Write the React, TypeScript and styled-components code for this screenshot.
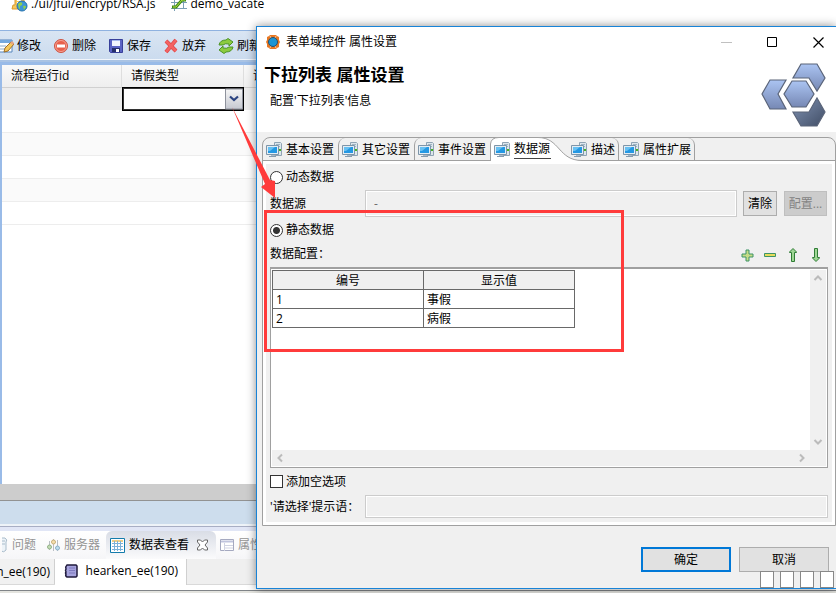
import React from "react";
import styled, { createGlobalStyle } from "styled-components";

const GlobalStyle = createGlobalStyle`
  * { box-sizing: border-box; }
  body {
    margin: 0;
    background: #fff;
    color: #000;
    font: 12px/16px "Open Sans", "Noto Sans CJK SC", sans-serif;
    overflow: hidden;
  }
  button, input, select { font: inherit; color: inherit; border-radius: 0; margin: 0; padding: 0; }
  svg { display: block; flex: none; }
`;

/* ---------- workbench behind the dialog ---------- */

const Screen = styled.div`
  position: relative;
  min-height: 100vh;
  display: flex;
  flex-direction: column;
  overflow: hidden;
  white-space: nowrap;
`;

const FileTabs = styled.nav`
  height: 30px;
  display: flex;
  align-items: flex-start;
  gap: 16px;
  padding-left: 11px;
`;

const FileTab = styled.button`
  display: flex;
  align-items: center;
  gap: 3px;
  height: 16px;
  margin-top: -4px;
  border: 0;
  background: none;
`;

const Toolbar = styled.div`
  height: 32px;
  display: flex;
  align-items: center;
  gap: 12px;
  border-top: 1px solid #8fb2e0;
  border-bottom: 2px solid #a9c3e4;
  padding-top: 1px;
  background: linear-gradient(#d9e5f3, #cbdbee);
  box-shadow: inset 0 -1px 0 #f0f5fb;
`;

const ToolButton = styled.button`
  display: flex;
  align-items: center;
  gap: 3px;
  border: 0;
  background: none;
`;

const GridArea = styled.section`
  flex: 1;
  border-top: 3px solid #99bbe8;
  border-left: 2px solid #99bbe8;
  background: #fff;
`;

const DataGrid = styled.table`
  width: 100%;
  table-layout: fixed;
  border-collapse: separate;
  border-spacing: 0;
  th {
    height: 23px;
    padding: 0 0 0 9px;
    text-align: left;
    font-weight: normal;
    background: linear-gradient(#f9f9f9, #eeeeee);
    border-right: 1px solid #dedede;
    border-bottom: 1px solid #d0d0d0;
  }
`;

const GridRow = styled.tr<{ $tone: string }>`
  height: 23px;
  background: ${(p) => p.$tone};
  td { padding: 0; border-bottom: 1px solid #ededed; }
  &:first-child { height: 22px; }
`;

const ComboFrame = styled.div`
  position: relative;
  height: 24px;
  margin: -1px 0 -2px;
  border: 1px solid #000;
  background: #fff;
  svg { position: absolute; right: 0; top: 0; pointer-events: none; }
`;

const Combo = styled.select`
  appearance: none;
  display: block;
  width: 100%;
  height: 22px;
  border: 1px solid #333;
  background: #fff;
`;

const GrayBand = styled.div`
  height: 16px;
  background: #cdcdcd;
`;

const BlueBand = styled.div`
  height: 24px;
  border-top: 1px solid #929292;
  background: #cddded;
`;

const ViewTabs = styled.nav`
  height: 35px;
  display: flex;
  align-items: flex-end;
  border-top: 2px solid #eef3f8;
  background: linear-gradient(#a8aec4 1px, #e1e6f6 1px 5px, #ffffff 5px, #f6f6f8);
`;

const ViewTab = styled.button<{ $on?: boolean; $width: number }>`
  width: ${(p) => p.$width}px;
  height: 28px;
  display: flex;
  align-items: center;
  gap: 4px;
  border: 0;
  padding: 0 0 0 4px;
  color: ${(p) => (p.$on ? "#000" : "#949494")};
  border-radius: 6px 6px 0 0;
  background: ${(p) => (p.$on ? "linear-gradient(#d9dde6, #fbfbfc)" : "none")};
  &:first-child { padding-left: 2px; }
`;

const SubTabs = styled.nav`
  height: 26px;
  display: flex;
  border-bottom: 1px solid #d9d9d9;
  background: #efefef;
`;

const SubTab = styled.button<{ $on?: boolean; $width: number }>`
  width: ${(p) => p.$width}px;
  height: ${(p) => (p.$on ? 26 : 25)}px;
  display: flex;
  align-items: center;
  justify-content: flex-end;
  gap: 8px;
  border: 0;
  border-right: 1px solid #d0d0d0;
  padding: 0 ${(p) => (p.$on ? 8 : 4)}px ${(p) => (p.$on ? 3 : 0)}px 0;
  background: ${(p) => (p.$on ? "#fff" : "#f1f1f1")};
`;

const StatusLine = styled.footer`
  height: 8px;
  border-top: 5px solid #fff;
  background: linear-gradient(#808488 1px, #e4e4df 1px);
`;

/* ---------- dialog ---------- */

const Dialog = styled.section`
  position: absolute;
  left: 256px;
  top: 26px;
  right: 0;
  bottom: 4px;
  display: flex;
  flex-direction: column;
  border: 1px solid #1883d7;
  border-right: 0;
  background: #f0f0f0;
  box-shadow: 0 0 9px rgba(0, 0, 0, 0.45);
`;

const DialogHead = styled.header`
  height: 105px;
  background: #fff;
`;

const TitleBar = styled.div`
  height: 30px;
  display: flex;
  align-items: center;
  gap: 5px;
  padding-left: 8px;
`;

const WindowButtons = styled.div`
  margin-left: auto;
  display: flex;
  gap: 10px;
`;

const WindowButton = styled.button`
  width: 36px;
  height: 28px;
  display: grid;
  place-items: center;
  border: 0;
  background: none;
`;

const Banner = styled.div`
  display: flex;
  justify-content: space-between;
  padding: 5px 9px 0 7px;
`;

const DialogTitle = styled.h1`
  margin: 0 0 4px;
  padding-top: 2px;
  font-size: 17px;
  line-height: 22px;
  font-weight: bold;
`;

const Subtitle = styled.p`
  margin: 0;
  padding: 3px 0 0 6px;
`;

const Folder = styled.div`
  flex: 1;
  display: flex;
  flex-direction: column;
  margin: 5px 0 0 5px;
  border: 1px solid #a0a0a0;
  border-radius: 8px 8px 0 0;
`;

const TabStrip = styled.div`
  height: 23px;
  display: flex;
  border-bottom: 1px solid #a0a0a0;
`;

const Tab = styled.button<{ $edge?: "left" | "right" }>`
  position: relative;
  height: 22px;
  display: flex;
  align-items: center;
  gap: 4px;
  border: 0 solid #a0a0a0;
  border-left-width: ${(p) => (p.$edge === "left" ? 1 : 0)}px;
  border-right-width: ${(p) => (p.$edge === "right" ? 1 : 0)}px;
  border-radius: ${(p) => (p.$edge === "left" ? "7px 0 0 0" : "0 7px 0 0")};
  padding: 1px 4px 0 3px;
  background: none;
`;

const RightTab = styled(Tab)`
  padding: 1px 3px 0 4px;
`;

const ActiveTab = styled(Tab)`
  padding: 1px 16px 0 4px;
  > svg, > span { position: relative; }
  > span { border-bottom: 1px solid #444; height: 19px; padding: 1px 1px 0 0; }
`;

const TabShape = styled.div`
  position: absolute;
  left: 0;
  top: -1px;
`;

const Panel = styled.div`
  flex: 1;
  display: flex;
  flex-direction: column;
  gap: 3px;
  border: 3px solid #fff;
  padding: 3px 4px 4px;
`;

const Row = styled.div<{ $h: number }>`
  height: ${(p) => p.$h}px;
  display: flex;
  align-items: center;
`;

const ToggleLabel = styled.label`
  display: flex;
  align-items: center;
  gap: 3px;
`;

const Radio = styled.input`
  appearance: none;
  width: 13px;
  height: 13px;
  border: 1px solid #333;
  border-radius: 50%;
  background: #fff;
  &:checked { background: radial-gradient(circle, #333 3px, #fff 4px); }
`;

const CheckBox = styled.input`
  appearance: none;
  width: 13px;
  height: 13px;
  border: 1px solid #333;
  background: #fff;
`;

const FieldLabel = styled.label`
  width: 95px;
`;

const TextBox = styled.input`
  flex: 1;
  min-width: 0;
  height: 100%;
  border: 1px solid #ccc;
  padding: 0 8px;
  background: #f0f0f0;
  color: #6d6d6d;
  box-shadow: inset 0 0 0 1px #fff;
`;

const SmallButton = styled.button`
  height: 25px;
  width: 34px;
  margin-left: 6px;
  border: 1px solid #adadad;
  background: #e1e1e1;
  &:disabled { width: 43px; margin: 0 1px 0 7px; background: #ccc; border-color: #bfbfbf; color: #838383; }
`;

const Tools = styled.div`
  margin-left: auto;
  padding: 2px 4px 0 0;
  display: flex;
  gap: 7px;
`;

const IconButton = styled.button`
  width: 16px;
  height: 16px;
  border: 0;
  background: none;
`;

const ListFrame = styled.div`
  flex: 1;
  display: grid;
  grid-template: 1fr 16px / 1fr 16px;
  border: 1px solid #a0a0a0;
  border-top-width: 2px;
  background: #fff;
  padding: 1px;
`;

const ListBody = styled.div`
  min-width: 0;
`;

const ValueTable = styled.table`
  width: 303px;
  table-layout: fixed;
  border-collapse: collapse;
  border: 1px solid #696969;
  th, td {
    height: 19px;
    padding: 1px 3px 0;
    border: 1px solid #696969;
    line-height: 16px;
  }
  th { background: #f0f0f0; font-weight: normal; }
`;

const ScrollBar = styled.div<{ $vertical?: boolean }>`
  display: flex;
  flex-direction: ${(p) => (p.$vertical ? "column" : "row")};
  justify-content: space-between;
  background: #f0f0f0;
`;

const Corner = styled.div`
  background: #f0f0f0;
`;

const Actions = styled.footer`
  height: 62px;
  display: flex;
  justify-content: flex-end;
  gap: 8px;
  padding: 21px 7px 0 0;
`;

const ActionButton = styled.button<{ $primary?: boolean }>`
  width: 90px;
  height: 25px;
  border: ${(p) => (p.$primary ? "2px solid #0078d7" : "1px solid #adadad")};
  background: #e1e1e1;
`;

const Squares = styled.div`
  position: absolute;
  right: 2px;
  bottom: 0;
  display: flex;
  gap: 6px;
`;

const Square = styled.i`
  width: 14px;
  height: 17px;
  border: 1px solid #888;
  background: #fff;
`;

const Markup = styled.svg`
  position: absolute;
  left: 0;
  top: 0;
  pointer-events: none;
`;

/* ---------- icons ---------- */

const ScriptIcon = () => (
  <svg width="17" height="16" viewBox="0 0 17 16">
    <path d="M4 1h9v12H1l1-4h2z" fill="#f8c85a" stroke="#d89830" />
    <path d="M6 4h4M6 7h3" stroke="#fff" strokeWidth="2" />
    <circle cx="11" cy="10" r="5" fill="#3d96d6" stroke="#2270ad" />
    <path d="M7 8q3-3 4-1t-2 3q0 4-1 3zM12 10q3-1 3 1l-2 3z" fill="#8ed04c" />
  </svg>
);
const FlowIcon = () => (
  <svg width="16" height="16" viewBox="0 0 16 16" fill="none">
    <path d="M0 6.5h16M0 12.5h16M3.500 3v12M12.500 1v12" stroke="#7b9fb5" />
    <path d="M1 11h4l6-7h4" stroke="#3c8a18" strokeWidth="3" />
    <path d="M2 11h3l6-7h3" stroke="#b6dd42" />
  </svg>
);
const EditIcon = () => (
  <svg width="14" height="16" viewBox="2 0 14 16">
    <path d="M0 2h14v12H0z" fill="#fff" stroke="#5485bd" />
    <path d="M0 2h14v3H0z" fill="#74a8df" />
    <path d="M2 8h6M2 11h5" stroke="#8baacb" />
    <path d="m6 14 1-4 6-6 3 2-6 7z" fill="#f7c95c" stroke="#9c6d29" />
    <path d="m12 5 2-2 2 2-1 2z" fill="#e7a482" />
  </svg>
);
const DeleteIcon = () => (
  <svg width="16" height="16" viewBox="0 0 16 16">
    <circle cx="8" cy="8" r="6.5" fill="#e8604c" stroke="#cc5544" />
    <circle cx="8" cy="8" r="5.5" fill="none" stroke="#f5a193" />
    <path d="M4 6.5h8v3H4z" fill="#fff" />
  </svg>
);
const SaveIcon = () => (
  <svg width="16" height="16" viewBox="0 0 16 16">
    <path d="M1.500 1.500h13v13h-12l-1-1z" fill="#5a63c4" stroke="#38409a" />
    <path d="M4 2h8v6H4z" fill="#f1f5fe" />
    <path d="M4 2h8v1H4z" fill="#a6b9ec" />
    <path d="M4 10h8v4H4z" fill="#26306c" />
    <path d="M8 11h3v3H8z" fill="#fff" />
  </svg>
);
const DiscardIcon = () => (
  <svg width="16" height="16" viewBox="0 0 16 16">
    <path d="m3 3 10 10M13 2 3 14" stroke="#dc4a4a" strokeWidth="4" />
    <path d="m3 3 10 10M13 2 3 14" stroke="#f46262" strokeWidth="2.5" />
  </svg>
);
const RefreshIcon = () => (
  <svg width="16" height="16" viewBox="0 0 16 16" fill="#8ccb3f" stroke="#4c9326" strokeLinejoin="round">
    <path d="M1 7q1-5 7-5l2-1.500L15 4l-4 4V6Q7 5 5 7z" />
    <path d="M15 9q-1 5-7 5l-2 1.500L1 12l4-4v2q4 1 6-1z" />
  </svg>
);
const ProblemsIcon = () => (
  <svg width="6" height="16" viewBox="10 0 6 16" fill="none" stroke="#a9bccb">
    <path d="M6 1h7q3 2 1 4v8q-2 3-5 1H6" fill="#edf3f8" />
    <path d="M10 4h3M10 7h3" />
  </svg>
);
const ServersIcon = () => (
  <svg width="13" height="16" viewBox="0 0 13 16">
    <path d="M2.500 4v9M6.500 2v12M10.500 3v11" stroke="#b9bec3" />
    <circle cx="2.500" cy="10" r="2" fill="#c4ddb5" stroke="#92b187" />
    <circle cx="6.500" cy="5" r="2" fill="#f5dfae" stroke="#c9b078" />
    <circle cx="10.500" cy="11" r="2" fill="#bcdef0" stroke="#8ab0c8" />
  </svg>
);
const GridIcon = () => (
  <svg width="15" height="15" viewBox="0 0 15 15">
    <path d="M.5.5h14v14H.5z" fill="#fff" stroke="#147cac" />
    <path d="M2 2h11v2H2z" fill="#edce86" />
    <path d="M2 5.500h11M2 8.500h11M2 11.500h11M4.500 3v10M7.500 3v10M10.500 3v10" stroke="#7db2d8" />
  </svg>
);
const CloseViewIcon = () => (
  <svg width="18" height="12" viewBox="-4 0 18 12" fill="#fff" stroke="#666">
    <path d="M.5 1h3l2 2 2-2h3v2L8 6l2.500 3v2h-3l-2-2-2 2h-3V9L3 6 .5 3z" />
  </svg>
);
const PropsIcon = () => (
  <svg width="14" height="14" viewBox="0 0 14 14" fill="#fff" stroke="#a5a9c0">
    <path d="M.5 1.500h13v11H.5z" />
    <path d="M1 3.500h12" stroke="#c0c4dd" strokeWidth="2" />
    <path d="M4.500 5v8M5 7.500h8M5 10h8" stroke="#d0d3e2" />
  </svg>
);
const DatabaseIcon = () => (
  <svg width="14" height="14" viewBox="0 0 14 14">
    <path d="M3 1h9l1 1v10l-1 1H3q-2-1-1-3-1-1 0-2-1-2 0-3-1-2 1-4z" fill="#a6a3dd" stroke="#201b3d" strokeWidth="1.500" />
    <path d="M5 4h6M5 6.500h6M5 9h6" stroke="#7d79bd" />
  </svg>
);
const AppIcon = () => (
  <svg width="16" height="16" viewBox="0 0 16 16">
    <path d="M5 1h6l1 1 2 1v3l1 2-1 2v3l-2 1-1 1H5l-1-1-2-1v-3L1 8l1-2V3l2-1z" fill="#e87722" />
    <path d="m5 2 6 12M11 2 5 14" stroke="#f6c89d" />
    <circle cx="8" cy="8" r="4.500" fill="#1b95d5" stroke="#25506e" />
  </svg>
);
const ServerPcIcon = () => (
  <svg width="16" height="16" viewBox="0 0 16 16">
    <path d="M8.500.5h6l1 1v12h-7z" fill="#dde6ec" stroke="#8fa3b3" />
    <path d="M10 2.500h4M10 4.500h4" stroke="#9fb4c2" />
    <path d="M13 7h2v2h-2z" fill="#44b521" />
    <path d="M.5 3.500h12v9H.5z" fill="#e3edf4" stroke="#7d95a9" />
    <path d="M2 5h9v6H2z" fill="#2498e3" />
    <path d="M2 5h7l-5 4H2z" fill="#67c0f2" />
    <path d="M3 14.500h7" stroke="#879cae" />
    <path d="M5 13h3v1H5z" fill="#a9bac7" />
  </svg>
);
const BannerLogo = () => (
  <svg width="66" height="66" viewBox="0 0 66 66" stroke="#5a6479" strokeWidth="1.200">
    <defs>
      <linearGradient id="light" x2="0" y2="1">
        <stop stopColor="#abc4f2" />
        <stop offset="1" stopColor="#7688b4" />
      </linearGradient>
      <linearGradient id="dark" x2="1" y2="1">
        <stop stopColor="#8193b3" />
        <stop offset="1" stopColor="#414e66" />
      </linearGradient>
    </defs>
    <path d="M40 2h16l8 14-8 13-8-13H32z" fill="url(#light)" />
    <path d="M9 18h16l-8 14 8 15H9L1 32z" fill="url(#light)" />
    <path d="M31 19h14l8 13-8 13H31l-8-13z" fill="url(#light)" />
    <path d="m56 36 8 14-8 14H40l-8-14h16z" fill="url(#dark)" />
  </svg>
);
const Chevron = ({ turn }: { turn: number }) => (
  <svg width="16" height="16" viewBox="0 0 16 16" fill="none">
    <path d="m4.500 10 3.500-3.500L11.500 10" stroke="#bbb" strokeWidth="2" transform={`rotate(${turn} 8 8)`} />
  </svg>
);
const PlusIcon = () => (
  <svg width="16" height="16" viewBox="0 0 16 16">
    <path d="M7 3h3v4h4v3h-4v4H7v-4H3V7h4z" fill="#c6dc86" stroke="#3d9467" />
  </svg>
);
const MinusIcon = () => (
  <svg width="16" height="16" viewBox="0 0 16 16">
    <path d="M2.500 6.500h11v3h-11z" fill="#e6dc5c" stroke="#3d9467" />
  </svg>
);
const ArrowIcon = ({ down }: { down?: boolean }) => (
  <svg width="16" height="16" viewBox="0 0 16 16">
    <path d="M8 1.500 11.500 5v.5h-2v9h-3v-9h-2V5z" fill="#9ed694" stroke="#2f7d35" transform={down ? "rotate(180 8 8)" : undefined} />
  </svg>
);

const tools = [
  { label: "修改", Icon: EditIcon },
  { label: "删除", Icon: DeleteIcon },
  { label: "保存", Icon: SaveIcon },
  { label: "放弃", Icon: DiscardIcon },
  { label: "刷新", Icon: RefreshIcon },
];
const values = [
  ["1", "事假"],
  ["2", "病假"],
];

function Workbench() {
  return (
    <>
      <FileTabs>
        <FileTab><ScriptIcon />./ui/jfui/encrypt/RSA.js</FileTab>
        <FileTab><FlowIcon />demo_vacate</FileTab>
      </FileTabs>
      <Toolbar>
        {tools.map(({ label, Icon }) => (
          <ToolButton key={label}><Icon />{label}</ToolButton>
        ))}
      </Toolbar>
      <GridArea>
        <DataGrid>
          <colgroup>
            <col width="120" />
            <col width="122" />
            <col />
          </colgroup>
          <thead>
            <tr><th>流程运行id</th><th>请假类型</th><th>请假</th></tr>
          </thead>
          <tbody>
            <GridRow $tone="#ededed">
              <td />
              <td>
                <ComboFrame>
                  <Combo aria-label="请假类型" />
                  <svg width="18" height="22" viewBox="0 0 18 22">
                    <defs>
                      <linearGradient id="drop" x2="0" y2="1">
                        <stop stopColor="#f6f6f6" />
                        <stop offset="1" stopColor="#c6c9d1" />
                      </linearGradient>
                    </defs>
                    <path d="M.5 1v20h17V1z" fill="url(#drop)" stroke="#8e929c" />
                    <path d="m5 8.500 4 3.500 4-3.500" fill="none" stroke="#2c4480" strokeWidth="2.200" />
                  </svg>
                </ComboFrame>
              </td>
              <td />
            </GridRow>
            {["#fff", "#fafafa", "#fff", "#fafafa", "#fff"].map((tone, i) => (
              <GridRow key={i} $tone={tone}><td /><td /><td /></GridRow>
            ))}
          </tbody>
        </DataGrid>
      </GridArea>
      <GrayBand />
      <BlueBand />
      <ViewTabs>
        <ViewTab $width={43}><ProblemsIcon />问题</ViewTab>
        <ViewTab $width={63}><ServersIcon />服务器</ViewTab>
        <ViewTab $width={110} $on><GridIcon />数据表查看<CloseViewIcon /></ViewTab>
        <ViewTab $width={60}><PropsIcon />属性</ViewTab>
      </ViewTabs>
      <SubTabs>
        <SubTab $width={55}>hearken_ee(190)</SubTab>
        <SubTab $width={132} $on><DatabaseIcon />hearken_ee(190)</SubTab>
      </SubTabs>
      <StatusLine />
    </>
  );
}

function PropertyDialog() {
  return (
    <Dialog role="dialog" aria-labelledby="dialog-title">
      <DialogHead>
        <TitleBar>
          <AppIcon />
          表单域控件 属性设置
          <WindowButtons>
            <WindowButton aria-label="最小化" disabled>
              <svg width="11" height="11"><path d="M0 5.500h11" stroke="#c0c0c0" /></svg>
            </WindowButton>
            <WindowButton aria-label="最大化">
              <svg width="11" height="11"><path d="M.5.5h9v9h-9z" fill="none" stroke="#000" /></svg>
            </WindowButton>
            <WindowButton aria-label="关闭">
              <svg width="11" height="11"><path d="m.5.5 10 10m0-10-10 10" stroke="#000" strokeWidth="1.200" /></svg>
            </WindowButton>
          </WindowButtons>
        </TitleBar>
        <Banner>
          <div>
            <DialogTitle id="dialog-title">下拉列表 属性设置</DialogTitle>
            <Subtitle>配置'下拉列表'信息</Subtitle>
          </div>
          <BannerLogo />
        </Banner>
      </DialogHead>
      <Folder>
        <TabStrip role="tablist">
          <Tab role="tab"><ServerPcIcon />基本设置</Tab>
          <Tab role="tab" $edge="left"><ServerPcIcon />其它设置</Tab>
          <Tab role="tab" $edge="left"><ServerPcIcon />事件设置</Tab>
          <ActiveTab role="tab" aria-selected="true">
            <TabShape>
              <svg width="96" height="25" viewBox="0 0 96 25">
                <path d="M.5 25V7Q1 .5 9 .5h39c22 0 20 23 44 23V25z" fill="#fff" />
                <path d="M.5 24V7Q1 .5 9 .5h39c22 0 20 23 44 23" fill="none" stroke="#a0a0a0" />
              </svg>
            </TabShape>
            <ServerPcIcon />
            <span>数据源</span>
          </ActiveTab>
          <RightTab role="tab" $edge="right"><ServerPcIcon />描述</RightTab>
          <RightTab role="tab" $edge="right"><ServerPcIcon />属性扩展</RightTab>
        </TabStrip>
        <Panel role="tabpanel">
          <Row $h={20}>
            <ToggleLabel><Radio type="radio" name="mode" />动态数据</ToggleLabel>
          </Row>
          <Row $h={27}>
            <FieldLabel htmlFor="source">数据源</FieldLabel>
            <TextBox id="source" defaultValue="-" disabled />
            <SmallButton>清除</SmallButton>
            <SmallButton disabled>配置...</SmallButton>
          </Row>
          <Row $h={20}>
            <ToggleLabel><Radio type="radio" name="mode" defaultChecked />静态数据</ToggleLabel>
          </Row>
          <Row $h={21}>
            数据配置：
            <Tools>
              <IconButton aria-label="添加"><PlusIcon /></IconButton>
              <IconButton aria-label="移除"><MinusIcon /></IconButton>
              <IconButton aria-label="上移"><ArrowIcon /></IconButton>
              <IconButton aria-label="下移"><ArrowIcon down /></IconButton>
            </Tools>
          </Row>
          <ListFrame>
            <ListBody>
              <ValueTable>
                <thead>
                  <tr><th>编号</th><th>显示值</th></tr>
                </thead>
                <tbody>
                  {values.map(([id, text]) => (
                    <tr key={id}><td>{id}</td><td>{text}</td></tr>
                  ))}
                </tbody>
              </ValueTable>
            </ListBody>
            <ScrollBar $vertical><Chevron turn={0} /><Chevron turn={180} /></ScrollBar>
            <ScrollBar><Chevron turn={270} /><Chevron turn={90} /></ScrollBar>
            <Corner />
          </ListFrame>
          <Row $h={21}>
            <ToggleLabel><CheckBox type="checkbox" />添加空选项</ToggleLabel>
          </Row>
          <Row $h={23}>
            <FieldLabel htmlFor="prompt">'请选择'提示语：</FieldLabel>
            <TextBox id="prompt" disabled />
          </Row>
        </Panel>
      </Folder>
      <Actions>
        <ActionButton $primary>确定</ActionButton>
        <ActionButton>取消</ActionButton>
      </Actions>
      <Squares aria-hidden="true">
        <Square /><Square /><Square /><Square />
      </Squares>
    </Dialog>
  );
}

export default function App() {
  return (
    <>
      <GlobalStyle />
      <Screen>
        <Workbench />
        <PropertyDialog />
        <Markup width="640" height="360" viewBox="0 0 640 360" aria-hidden="true">
          <path d="M265.500 211.500h357v139h-357z" fill="none" stroke="#ff3b3b" strokeWidth="3" />
          <path d="M232 107 270 180l5 1v17l-14-11 4-3z" fill="#ff3b3b" />
        </Markup>
      </Screen>
    </>
  );
}
